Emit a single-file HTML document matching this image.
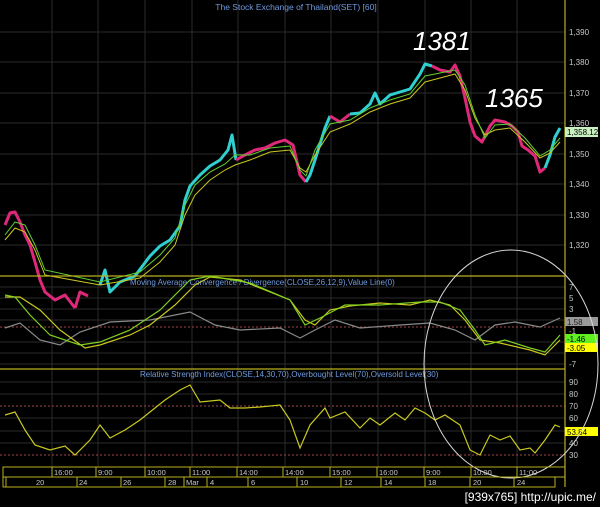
<!DOCTYPE html>
<html><head><style>
html,body{margin:0;padding:0;background:#000;width:600px;height:507px;overflow:hidden}
svg{display:block}
text{font-family:"Liberation Sans",sans-serif}
</style></head><body>
<svg width="600" height="507" viewBox="0 0 600 507">
<rect width="600" height="507" fill="#000"/>
<!-- grid -->
<g stroke="#2a2a2a" stroke-width="1">
<line x1="52" y1="0" x2="52" y2="467"/><line x1="98" y1="0" x2="98" y2="467"/><line x1="145" y1="0" x2="145" y2="467"/><line x1="192" y1="0" x2="192" y2="467"/><line x1="238" y1="0" x2="238" y2="467"/><line x1="285" y1="0" x2="285" y2="467"/><line x1="331" y1="0" x2="331" y2="467"/><line x1="378" y1="0" x2="378" y2="467"/><line x1="425" y1="0" x2="425" y2="467"/><line x1="471" y1="0" x2="471" y2="467"/><line x1="517" y1="0" x2="517" y2="467"/>
<line x1="0" y1="32" x2="565" y2="32"/><line x1="0" y1="62" x2="565" y2="62"/><line x1="0" y1="93" x2="565" y2="93"/><line x1="0" y1="123" x2="565" y2="123"/><line x1="0" y1="154" x2="565" y2="154"/><line x1="0" y1="184" x2="565" y2="184"/><line x1="0" y1="215" x2="565" y2="215"/><line x1="0" y1="245" x2="565" y2="245"/>
<line x1="0" y1="287" x2="565" y2="287"/><line x1="0" y1="298" x2="565" y2="298"/><line x1="0" y1="309" x2="565" y2="309"/><line x1="0" y1="320" x2="565" y2="320"/><line x1="0" y1="342" x2="565" y2="342"/><line x1="0" y1="353" x2="565" y2="353"/><line x1="0" y1="364" x2="565" y2="364"/>
<line x1="0" y1="382" x2="565" y2="382"/><line x1="0" y1="394" x2="565" y2="394"/><line x1="0" y1="418" x2="565" y2="418"/><line x1="0" y1="431" x2="565" y2="431"/><line x1="0" y1="443" x2="565" y2="443"/>
</g>
<g stroke="#a04848" stroke-width="1" stroke-dasharray="2,2">
<line x1="0" y1="327" x2="565" y2="327"/><line x1="0" y1="406" x2="565" y2="406"/><line x1="0" y1="455" x2="565" y2="455"/>
</g>
<!-- title -->
<text x="296" y="10" fill="#6f9be0" font-size="8.5" text-anchor="middle">The Stock Exchange of Thailand(SET) [60]</text>
<!-- price candles approximated -->
<g fill="none" stroke-width="3" stroke-linejoin="round">
<polyline stroke="#e0287a" points="5,225 10,213 15,212 20,222 25,235 30,245 35,262 40,280 45,292 55,300 65,295 75,308"/>
<polyline stroke="#e0287a" points="75,308 80,292 88,296"/>
<polyline stroke="#30d0d0" points="100,285 105,270 110,292 120,282 135,276 150,256 160,246 170,240 180,226 185,200 190,186 200,175 210,166 220,160 228,150 232,135 236,160"/>
<polyline stroke="#e0287a" points="236,160 245,155 255,150 265,148 275,143 285,140 293,145 300,175 306,182"/>
<polyline stroke="#30d0d0" points="306,182 310,175 315,160 325,128 330,116"/>
<polyline stroke="#e0287a" points="330,116 340,122 350,114"/>
<polyline stroke="#30d0d0" points="350,114 360,113 370,104 375,93 380,104 390,95 400,92 410,89 420,74 425,64 432,66"/>
<polyline stroke="#e0287a" points="432,66 440,70 450,72 455,65 460,76 465,98 470,122 475,136 482,142 490,126 495,120 505,122 512,126 518,132 522,146 528,150 535,156 540,172 545,168"/>
<polyline stroke="#30d0d0" points="545,168 550,155 555,137 560,128"/>
</g>
<g fill="none" stroke-width="1">
<polyline stroke="#c8c820" points="5,240 15,228 25,232 35,250 45,275 100,285 140,278 160,262 175,245 185,215 195,195 210,180 225,170 235,165 250,160 270,152 290,150 300,168 306,172 315,155 330,132 350,124 370,112 390,104 410,98 425,82 440,78 455,74 465,90 475,118 485,135 495,130 510,128 525,142 540,158 550,153 560,142"/>
<polyline stroke="#60d030" points="5,235 15,222 25,225 35,245 45,270 100,282 140,272 160,255 175,238 185,205 195,185 210,172 225,164 235,155 250,155 270,148 290,146 300,170 306,176 315,150 330,124 350,120 370,108 390,100 410,94 425,76 440,73 455,70 465,85 475,115 485,138 495,125 510,124 525,138 540,156 550,150 560,138"/>
</g>
<!-- panel separators -->
<g stroke="#b8b020" stroke-width="1.2">
<line x1="0" y1="276" x2="565" y2="276"/><line x1="0" y1="369" x2="565" y2="369"/><line x1="565" y1="0" x2="565" y2="487"/>
</g>
<!-- MACD -->
<text x="130" y="285" fill="#6f9be0" font-size="8">Moving Average Convergence / Divergence(CLOSE,26,12,9),Value Line(0)</text>
<g fill="none" stroke-width="1.2">
<polyline stroke="#8a8a8a" points="5,328 20,323 40,340 60,345 80,332 110,322 150,320 190,312 215,325 240,330 280,328 300,338 315,330 335,320 360,328 400,325 430,323 455,330 475,340 495,325 515,322 540,327 560,318"/>
<polyline stroke="#c8c820" points="5,297 20,297 40,310 60,330 85,348 100,345 130,335 150,325 175,305 195,285 210,277 240,280 270,292 290,300 305,320 315,325 330,310 350,306 380,303 410,305 430,300 450,305 465,320 480,340 500,343 530,350 545,355 560,340"/>
<polyline stroke="#80d020" points="5,295 15,297 30,315 50,335 80,345 100,342 130,330 160,310 190,280 210,276 250,283 290,300 305,325 320,318 345,305 380,305 420,302 440,302 460,310 475,330 485,345 505,340 530,348 545,352 560,335"/>
</g>
<!-- RSI -->
<text x="140" y="377" fill="#6f9be0" font-size="8">Relative Strength Index(CLOSE,14,30,70),Overbought Level(70),Oversold Level(30)</text>
<polyline fill="none" stroke="#c8c820" stroke-width="1.2" points="5,415 15,412 25,430 35,445 50,450 65,446 75,455 90,440 100,425 110,438 125,430 140,420 155,408 165,400 180,390 190,385 200,402 220,400 230,408 245,408 260,407 280,405 290,420 300,448 310,425 325,408 330,418 345,412 360,428 370,418 380,425 395,413 405,420 415,408 425,413 435,420 445,415 460,425 470,450 480,455 490,435 500,440 510,436 520,450 530,448 535,453 545,440 555,425 560,427"/>
<!-- right axis labels -->
<g fill="#c8c8c8" font-size="8">
<text x="569" y="35">1,390</text><text x="569" y="65">1,380</text><text x="569" y="96">1,370</text><text x="569" y="126">1,360</text><text x="569" y="157">1,350</text><text x="569" y="187">1,340</text><text x="569" y="218">1,330</text><text x="569" y="248">1,320</text>
<text x="569" y="290">7</text><text x="569" y="301">5</text><text x="569" y="312">3</text><text x="569" y="334">-1</text><text x="569" y="367">-7</text>
<text x="569" y="385">90</text><text x="569" y="397">80</text><text x="569" y="409">70</text><text x="569" y="421">60</text><text x="569" y="446">40</text><text x="569" y="458">30</text>
</g>
<rect x="565" y="127" width="33" height="10" fill="#c8f0c0"/><text x="567" y="135" fill="#000" font-size="8">1,358.12</text>
<rect x="565" y="317" width="33" height="9" fill="#9a9a9a"/><text x="567" y="325" fill="#222" font-size="8">1.58</text>
<rect x="565" y="334" width="33" height="9" fill="#60f020"/><text x="567" y="342" fill="#000" font-size="8">-1.46</text>
<rect x="565" y="343" width="33" height="9" fill="#ffff00"/><text x="567" y="351" fill="#000" font-size="8">-3.05</text>
<rect x="565" y="427" width="33" height="9" fill="#ffff00"/><text x="567" y="435" fill="#000" font-size="8">53.84</text>
<!-- annotations -->
<text x="413" y="50" fill="#fff" font-size="26" font-style="italic">1381</text>
<text x="485" y="107" fill="#fff" font-size="26" font-style="italic">1365</text>
<ellipse cx="511" cy="364" rx="87" ry="114" fill="none" stroke="#d8d8d8" stroke-width="1"/>
<!-- time axis -->
<g stroke="#b8b020" stroke-width="1" fill="none">
<rect x="3" y="467" width="562" height="10"/><rect x="3" y="477" width="552" height="10"/>
<line x1="52" y1="467" x2="52" y2="477"/><line x1="96" y1="467" x2="96" y2="477"/><line x1="145" y1="467" x2="145" y2="477"/><line x1="190" y1="467" x2="190" y2="477"/><line x1="237" y1="467" x2="237" y2="477"/><line x1="283" y1="467" x2="283" y2="477"/><line x1="330" y1="467" x2="330" y2="477"/><line x1="377" y1="467" x2="377" y2="477"/><line x1="424" y1="467" x2="424" y2="477"/><line x1="471" y1="467" x2="471" y2="477"/><line x1="517" y1="467" x2="517" y2="477"/>
<line x1="6" y1="477" x2="6" y2="487"/><line x1="77" y1="477" x2="77" y2="487"/><line x1="121" y1="477" x2="121" y2="487"/><line x1="165" y1="477" x2="165" y2="487"/><line x1="184" y1="477" x2="184" y2="487"/><line x1="207" y1="477" x2="207" y2="487"/><line x1="248" y1="477" x2="248" y2="487"/><line x1="297" y1="477" x2="297" y2="487"/><line x1="341" y1="477" x2="341" y2="487"/><line x1="381" y1="477" x2="381" y2="487"/><line x1="425" y1="477" x2="425" y2="487"/><line x1="470" y1="477" x2="470" y2="487"/><line x1="514" y1="477" x2="514" y2="487"/>
</g>
<g fill="#c8c8c8" font-size="7.5">
<text x="54" y="475">16:00</text><text x="98" y="475">9:00</text><text x="147" y="475">10:00</text><text x="192" y="475">11:00</text><text x="239" y="475">14:00</text><text x="285" y="475">14:00</text><text x="332" y="475">15:00</text><text x="379" y="475">16:00</text><text x="426" y="475">9:00</text><text x="473" y="475">10:00</text><text x="519" y="475">11:00</text>
<text x="36" y="485">20</text><text x="79" y="485">24</text><text x="123" y="485">26</text><text x="168" y="485">28</text><text x="186" y="485">Mar</text><text x="210" y="485">4</text><text x="251" y="485">6</text><text x="300" y="485">10</text><text x="344" y="485">12</text><text x="384" y="485">14</text><text x="428" y="485">18</text><text x="473" y="485">20</text><text x="517" y="485">24</text>
</g>
<text x="596" y="501" fill="#fff" font-size="12" text-anchor="end" font-family="Liberation Mono,monospace">[939x765] http://upic.me/</text>
</svg>
</body></html>
